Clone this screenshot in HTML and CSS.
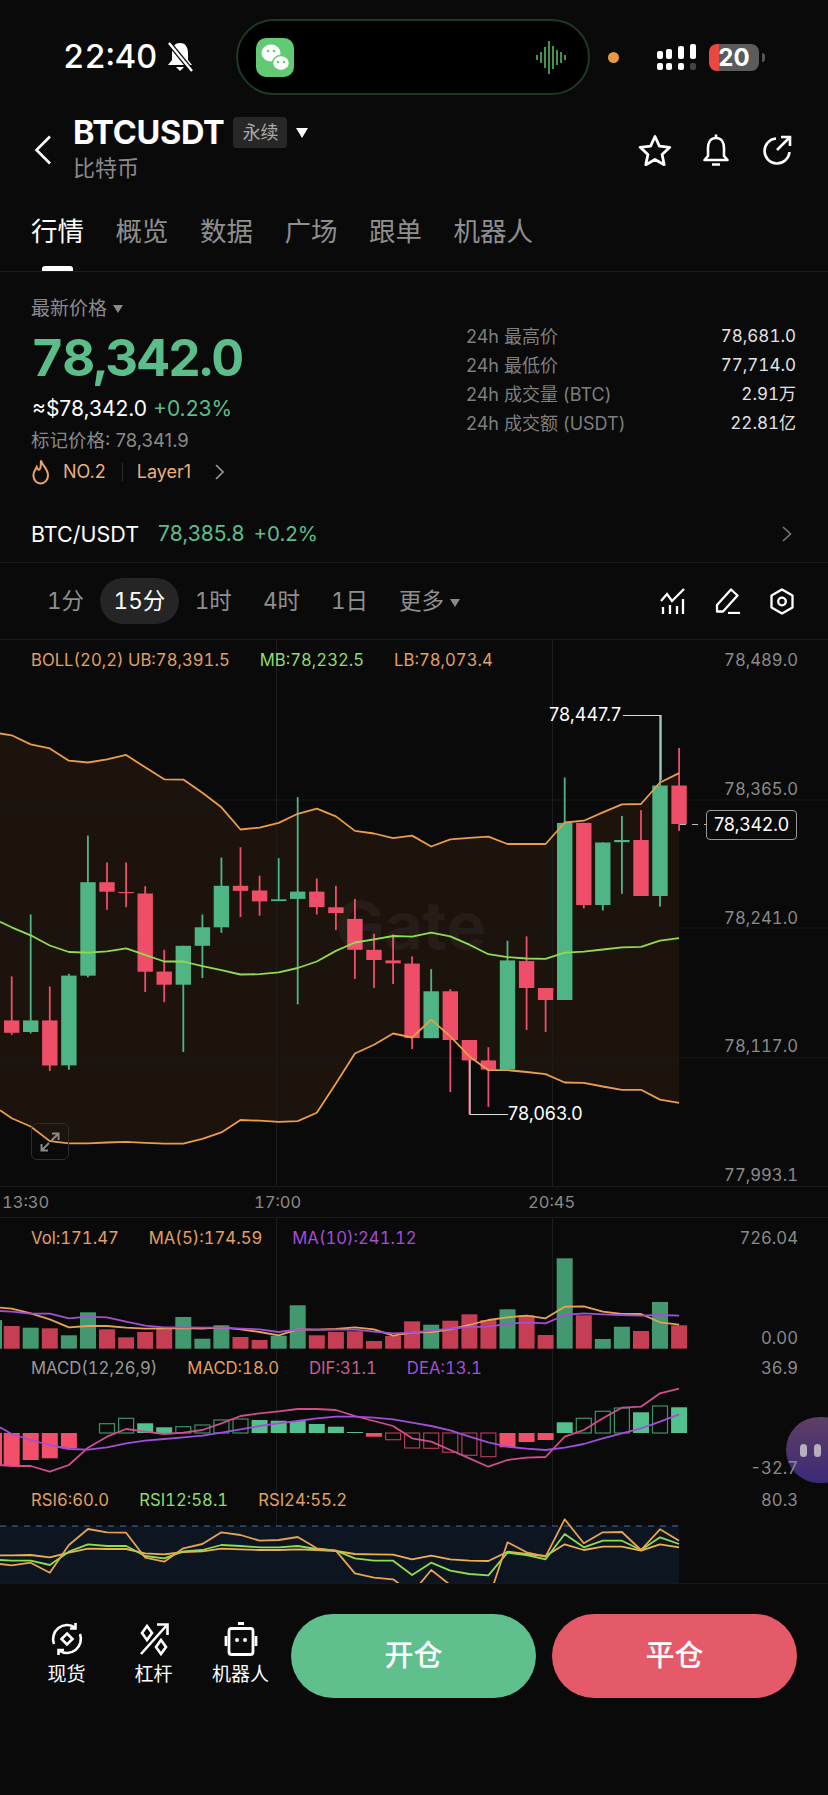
FILE: index.html
```html
<!DOCTYPE html>
<html lang="zh-CN">
<head>
    <meta charset="UTF-8">
    <meta name="viewport" content="width=device-width, initial-scale=1.0">
    <title>BTCUSDT 永续</title>
    <link rel="stylesheet" href="styles.css">
</head>
<body>
    <div class="status-bar">
        <span class="clock">22:40</span>
        <svg class="mute" width="30" height="30" viewBox="0 0 30 30">
            <path d="M15 1c-6 0-8 5-8 10v7l-4 5h24l-4-5v-7c0-5-2-10-8-10z" fill="#fff"/>
            <path d="M11 25h8l-4 4z" fill="#fff"/>
            <path d="M4 1l23 28" stroke="#0a0a0a" stroke-width="5"/>
            <path d="M4 1l23 28" stroke="#fff" stroke-width="2.400"/>
        </svg>
        <div class="island">
            <svg width="38" height="39" viewBox="0 0 38 39">
                <rect width="38" height="39" rx="10" fill="#62c975"/>
                <ellipse cx="15" cy="15" rx="9.500" ry="8.500" fill="#fff"/>
                <ellipse cx="25" cy="25" rx="8.500" ry="7.500" fill="#fff" stroke="#62c975" stroke-width="1.500"/>
                <circle cx="12" cy="13" r="1.300" fill="#62c975"/>
                <circle cx="18" cy="13" r="1.300" fill="#62c975"/>
                <circle cx="22" cy="24" r="1.200" fill="#62c975"/>
                <circle cx="28" cy="24" r="1.200" fill="#62c975"/>
            </svg>
            <svg width="30" height="33" viewBox="0 0 30 33" stroke="#58b95c" stroke-width="1.600">
                <path d="M1 14v5M5 11v11M9 6v21M13 0v33M17 5v23M21 9v15M25 11v11M29 14v5"/>
            </svg>
        </div>
        <span class="cam-dot"></span>
        <svg class="signal" width="40" height="26" viewBox="0 0 40 26" fill="#fff">
            <rect x="0" y="7" width="6" height="8" rx="2"/><rect x="0" y="19" width="6" height="7" rx="2"/>
            <rect x="9" y="5" width="6" height="10" rx="2"/><rect x="9" y="19" width="6" height="7" rx="2"/>
            <rect x="21" y="2" width="6" height="13" rx="2"/><rect x="21" y="19" width="6" height="7" rx="2"/>
            <rect x="33" y="0" width="6" height="15" rx="2"/><rect x="33" y="19" width="6" height="7" rx="2" fill="#444"/>
        </svg>
        <div class="battery">20</div>
        <span class="battery-nub"></span>
    </div>

    <div class="header">
        <svg class="back" width="18" height="30" viewBox="0 0 18 30" fill="none" stroke="#fff" stroke-width="2.600">
            <path d="M16 1.500L2.500 15 16 28.500"/>
        </svg>
        <div class="title-block">
            <div class="title-row">
                <span class="symbol">BTCUSDT</span>
                <span class="tag">永续</span>
                <span class="caret-white"></span>
            </div>
            <div class="subtitle">比特币</div>
        </div>
        <div class="header-icons">
            <svg width="34" height="32" viewBox="0 0 34 32" fill="none" stroke="#fff" stroke-width="2.800" stroke-linejoin="round">
                <path d="M17 2.500l4.400 9.600 10.400 1.200-7.700 7.200 2.100 10.200L17 25.500l-9.200 5.200 2.100-10.200-7.700-7.200 10.400-1.200z"/>
            </svg>
            <svg width="28" height="32" viewBox="0 0 28 32" fill="none" stroke="#fff" stroke-width="2.600" stroke-linejoin="round">
                <path d="M14 4c-6 0-8 5-8 10v8l-3.500 4h23L22 22v-8c0-5-2-10-8-10z"/>
                <path d="M14 0.500V4M10 30.500h8"/>
            </svg>
            <svg width="30" height="30" viewBox="0 0 30 30" fill="none" stroke="#fff" stroke-width="2.600">
                <path d="M14 3.500A12.500 12.500 0 1 0 27.500 17"/>
                <path d="M15 15L28 2M19 2h9v9"/>
            </svg>
        </div>
    </div>

    <div class="tabs">
        <span class="tab active">行情</span>
        <span class="tab">概览</span>
        <span class="tab">数据</span>
        <span class="tab">广场</span>
        <span class="tab">跟单</span>
        <span class="tab">机器人</span>
    </div>

    <div class="info">
        <div class="info-left">
            <div class="price-label">最新价格<span class="caret-gray"></span></div>
            <div class="last-price">78,342.0</div>
            <div class="fiat">≈$78,342.0 <span class="up">+0.23%</span></div>
            <div class="mark">标记价格: 78,341.9</div>
            <div class="hot">
                <svg width="18" height="26" viewBox="0 0 18 26" fill="none" stroke="#e9a36c" stroke-width="2">
                    <path d="M9 1.500c1 5 7 8 7 15a7.300 8 0 0 1-14.600 0c0-4 2-6 3.300-8.500 .7 2 1.500 3 2.600 2.500C9.500 9 8.500 5 9 1.500z"/>
                </svg>
                <span class="hot-rank">NO.2</span>
                <span class="hot-sep"></span>
                <span>Layer1</span>
                <svg class="hot-more" width="9" height="16" viewBox="0 0 9 16" fill="none" stroke="#999" stroke-width="1.600">
                    <path d="M1 1l7 7-7 7"/>
                </svg>
            </div>
        </div>
        <div class="stats">
            <div class="stat"><span>24h 最高价</span><b>78,681.0</b></div>
            <div class="stat"><span>24h 最低价</span><b>77,714.0</b></div>
            <div class="stat"><span>24h 成交量 (BTC)</span><b>2.91万</b></div>
            <div class="stat"><span>24h 成交额 (USDT)</span><b>22.81亿</b></div>
        </div>
    </div>

    <div class="pair-row">
        <span class="pair">BTC/USDT</span>
        <span class="up pair-price">78,385.8</span>
        <span class="up">+0.2%</span>
        <svg class="pair-more" width="10" height="16" viewBox="0 0 10 16" fill="none" stroke="#777" stroke-width="1.600">
            <path d="M1 1l7.500 7-7.500 7"/>
        </svg>
    </div>

    <div class="periods">
        <span class="period">1分</span>
        <span class="period active">15分</span>
        <span class="period">1时</span>
        <span class="period">4时</span>
        <span class="period">1日</span>
        <span class="period">更多<span class="caret-gray"></span></span>
        <div class="period-tools">
            <svg width="26" height="26" viewBox="0 0 26 26" fill="none" stroke="#fff" stroke-width="2.300">
                <path d="M1 13l6-7 5 7L24 1"/>
                <path d="M3 19v7M10 17v9M17 18v8M23 11v15"/>
            </svg>
            <svg width="26" height="26" viewBox="0 0 26 26" fill="none" stroke="#fff" stroke-width="2.300" stroke-linejoin="round">
                <path d="M16 1.500l6.500 6L8 23.500H2v-6.500z"/>
                <path d="M13 25h12"/>
            </svg>
            <svg width="24" height="27" viewBox="0 0 24 27" fill="none" stroke="#fff" stroke-width="2.300" stroke-linejoin="round">
                <path d="M12 1.500l10.500 6v12l-10.500 6-10.500-6v-12z"/>
                <circle cx="12" cy="13.500" r="3.800"/>
            </svg>
        </div>
    </div>

    <div class="charts">
        <svg id="chart" class="chart-canvas" width="828" height="943" viewBox="0 640 828 943"></svg>
        <div class="float-ball"><i></i><i></i></div>

        <div class="panel panel-main">
            <div class="legend">
                <span class="c-orange">BOLL(20,2) UB:78,391.5</span>
                <span class="c-green">MB:78,232.5</span>
                <span class="c-orange">LB:78,073.4</span>
            </div>
            <div class="axis">
                <span>78,489.0</span>
                <span>78,365.0</span>
                <span>78,241.0</span>
                <span>78,117.0</span>
                <span>77,993.1</span>
            </div>
            <div class="watermark">Gate</div>
            <div class="extreme extreme-high">78,447.7</div>
            <div class="extreme extreme-low">78,063.0</div>
            <div class="last-box">78,342.0</div>
            <div class="expand">
                <svg width="20" height="20" viewBox="0 0 20 20" fill="none" stroke="#8a8a8a" stroke-width="2">
                    <path d="M11 9l7-7M12 1.500h6.500V8" />
                    <path d="M9 11l-7 7M8 18.500H1.500V12"/>
                </svg>
            </div>
        </div>

        <div class="time-axis">
            <span>13:30</span>
            <span>17:00</span>
            <span>20:45</span>
        </div>

        <div class="panel panel-vol">
            <div class="legend">
                <span class="c-orange">Vol:171.47</span>
                <span class="c-orange">MA(5):174.59</span>
                <span class="c-purple">MA(10):241.12</span>
            </div>
            <div class="axis">
                <span>726.04</span>
                <span>0.00</span>
            </div>
        </div>

        <div class="panel panel-macd">
            <div class="legend">
                <span class="c-gray">MACD(12,26,9)</span>
                <span class="c-orange">MACD:18.0</span>
                <span class="c-pink">DIF:31.1</span>
                <span class="c-purple">DEA:13.1</span>
            </div>
            <div class="axis">
                <span>36.9</span>
                <span>-32.7</span>
            </div>
        </div>

        <div class="panel panel-rsi">
            <div class="legend">
                <span class="c-orange">RSI6:60.0</span>
                <span class="c-green">RSI12:58.1</span>
                <span class="c-orange">RSI24:55.2</span>
            </div>
            <div class="axis">
                <span>80.3</span>
            </div>
        </div>
    </div>

    <div class="bottom-bar">
        <div class="bottom-link">
            <svg width="34" height="34" viewBox="0 0 34 34" fill="none" stroke="#fff" stroke-width="2.600">
                <path d="M4 22A14 14 0 0 1 25 5.500"/>
                <path d="M30 12A14 14 0 0 1 9 28.500"/>
                <path d="M25.500 1v5.500H20M8.500 33v-5H14"/>
                <path d="M17 11.500l5.500 5.500-5.500 5.500-5.500-5.500z"/>
            </svg>
            <span>现货</span>
        </div>
        <div class="bottom-link">
            <svg width="34" height="34" viewBox="0 0 34 34" fill="none" stroke="#fff" stroke-width="2.600">
                <path d="M4 32L30 3M20 2.500h10.500V13"/>
                <path d="M10 4l5 7-5 7-5-7zM24 18l5 7-5 7-5-7z"/>
            </svg>
            <span>杠杆</span>
        </div>
        <div class="bottom-link link-wide">
            <svg width="34" height="34" viewBox="0 0 34 34" fill="none" stroke="#fff" stroke-width="2.800">
                <rect x="5" y="6.500" width="24" height="26" rx="2.500"/>
                <path d="M2 14v10M32 14v10"/>
                <rect x="14" y="0" width="6" height="3" fill="#fff" stroke="none"/>
                <circle cx="13" cy="18" r="2" fill="#fff" stroke="none"/>
                <circle cx="21" cy="18" r="2" fill="#fff" stroke="none"/>
            </svg>
            <span>机器人</span>
        </div>
        <div class="btn btn-open">开仓</div>
        <div class="btn btn-close">平仓</div>
    </div>

    <script src="chart.js"></script>
</body>
</html>
```

FILE: styles.css
```css
* {
    box-sizing: border-box;
}
html, body {
    margin: 0;
    height: 1795px;
    overflow: hidden;
}
body {
    width: 828px;
    background: #0a0a0a;
    color: #fff;
    font-family: Inter, "Noto Sans CJK SC", sans-serif;
}
.up { color: #5bbd8a; }
.c-orange { color: #e0a162; }
.c-green { color: #8fdc6c; }
.c-purple { color: #a24fd8; }
.c-pink { color: #c75c97; }
.c-gray { color: #9a9a9a; }

/* status bar */
.status-bar {
    display: flex;
    align-items: center;
    height: 114px;
    padding-left: 63px;
}
.clock {
    width: 102px;
    margin-top: -2px;
    font-size: 33px;
    font-weight: 500;
    font-variant-numeric: tabular-nums;
}
.mute { margin-right: 41px; }
.island {
    display: flex;
    align-items: center;
    justify-content: space-between;
    width: 354px;
    height: 76px;
    padding: 0 22px 0 18px;
    background: #000;
    border: 2px solid #1e3a22;
    border-radius: 38px;
}
.cam-dot {
    width: 11px;
    height: 11px;
    margin-left: 18px;
    background: #e89a3e;
    border-radius: 50%;
}
.signal { margin-left: 38px; }
.battery {
    width: 50px;
    height: 27px;
    margin-left: 12px;
    background: linear-gradient(90deg, #e8483f 20%, #5b5b5b 20%);
    border-radius: 8px;
    font-size: 24px;
    font-weight: 700;
    line-height: 27px;
    text-align: center;
}
.battery-nub {
    width: 3px;
    height: 9px;
    margin-left: 3px;
    background: #555;
    border-radius: 0 3px 3px 0;
}

/* header */
.header {
    display: flex;
    align-items: center;
    height: 76px;
    padding: 0 36px 5px 34px;
}
.back { margin-right: 21px; }
.title-block { margin-top: -2px; }
.title-row {
    display: flex;
    align-items: center;
    height: 36px;
}
.symbol {
    font-size: 32.500px;
    font-weight: 700;
    letter-spacing: -0.300px;
}
.tag {
    width: 54px;
    height: 31px;
    margin-left: 9px;
    background: #272727;
    border-radius: 4px;
    color: #aaa;
    font-size: 18px;
    line-height: 31px;
    text-align: center;
}
.caret-white {
    width: 0;
    height: 0;
    margin-left: 9px;
    border-left: 6px solid transparent;
    border-right: 6px solid transparent;
    border-top: 10px solid #fff;
}
.subtitle {
    margin-top: 2px;
    color: #8a8a8a;
    font-size: 22px;
    line-height: 30px;
}
.header-icons {
    display: flex;
    align-items: center;
    gap: 30px;
    margin-left: auto;
}
.header-icons svg:last-child { margin-left: 2px; }

/* tabs */
.tabs {
    display: flex;
    gap: 31.500px;
    height: 82px;
    padding: 27px 0 0 31px;
    border-bottom: 1px solid #1d1d1d;
}
.tab {
    position: relative;
    color: #8f8f8f;
    font-size: 26.500px;
    line-height: 28px;
}
.tab.active { color: #fff; }
.tab.active::after {
    content: "";
    position: absolute;
    left: 11px;
    top: 49px;
    width: 31px;
    height: 5px;
    background: #fff;
    border-radius: 3px 3px 0 0;
}

/* price block */
.info {
    display: flex;
    justify-content: space-between;
    height: 233px;
    padding: 22px 32px 0;
}
.price-label {
    margin-top: 1px;
    margin-left: -1px;
    color: #8a8a8a;
    font-size: 19px;
    line-height: 28px;
}
.caret-gray {
    display: inline-block;
    margin-left: 6px;
    border-left: 5.500px solid transparent;
    border-right: 5.500px solid transparent;
    border-top: 8px solid #8a8a8a;
    vertical-align: 2px;
}
.last-price {
    margin-top: 2px;
    margin-left: -1px;
    color: #5bbd8a;
    font-size: 51px;
    font-weight: 700;
    font-variant-numeric: tabular-nums;
    letter-spacing: -1.700px;
    line-height: 66px;
}
.fiat {
    margin-top: 3px;
    font-size: 21px;
    line-height: 30px;
}
.mark {
    margin-top: 2px;
    margin-left: -1px;
    color: #8a8a8a;
    font-size: 18.500px;
    line-height: 28px;
}
.hot {
    display: flex;
    align-items: center;
    margin-top: 4px;
    color: #e9b07c;
    font-size: 18px;
    line-height: 28px;
}
.hot-rank { margin-left: 13px; }
.hot-sep {
    width: 1px;
    height: 18px;
    margin: 0 14px 0 16px;
    background: #2c2c2c;
}
.hot-more { margin-left: 24px; }
.stats {
    width: 330px;
    padding-top: 28px;
}
.stat {
    display: flex;
    justify-content: space-between;
    color: #7f7f7f;
    font-size: 18px;
    line-height: 29px;
}
.stat b {
    color: #e2e2e2;
    font-size: 17px;
    font-variant-numeric: tabular-nums;
    font-weight: 400;
}

/* spot pair row */
.pair-row {
    display: flex;
    align-items: center;
    gap: 9px;
    height: 58px;
    padding: 0 36px 0 31px;
    border-bottom: 1px solid #1a1a1a;
    font-size: 20.500px;
}
.pair {
    margin-right: 10px;
    font-size: 21.500px;
}
.pair-price { font-size: 21px; }
.pair-more { margin-left: auto; }

/* period selector */
.periods {
    display: flex;
    align-items: center;
    height: 77px;
    padding: 0 34px 0 31.500px;
    border-bottom: 1px solid #1a1a1a;
    font-variant-numeric: tabular-nums;
}
.period {
    padding: 0 15.500px;
    color: #8f8f8f;
    font-size: 22.500px;
    line-height: 46px;
}
.period.active {
    padding: 0 14px;
    background: #252525;
    border-radius: 23px;
    color: #fff;
}
.period-tools {
    display: flex;
    align-items: center;
    gap: 29px;
    margin-left: auto;
}

/* chart stack */
.charts {
    position: relative;
    height: 943px;
}
.chart-canvas {
    position: absolute;
    left: 0;
    top: 0;
}
.panel {
    position: relative;
    display: flex;
    justify-content: space-between;
    padding-right: 30px;
    font-size: 16.700px;
    font-variant-numeric: tabular-nums;
    line-height: 24px;
}
.legend {
    display: flex;
    gap: 30px;
    height: 24px;
    padding-left: 31px;
}
.axis {
    display: flex;
    flex-direction: column;
    justify-content: space-between;
    align-items: flex-end;
    color: #8a8a8a;
}
.panel-main {
    height: 547px;
    padding-top: 8px;
}
.panel-vol {
    height: 138px;
    padding-top: 8px;
}
.panel-vol .axis { height: 124px; }
.panel-macd { height: 132px; }
.panel-macd .axis { height: 124px; }
.panel-rsi { height: 95px; }
.time-axis {
    position: relative;
    display: grid;
    grid-template-columns: 252px 274px auto;
    height: 31px;
    padding-left: 2px;
    color: #8a8a8a;
    font-size: 16.500px;
    font-variant-numeric: tabular-nums;
    line-height: 31px;
}
.watermark {
    position: absolute;
    left: 335px;
    top: 250px;
    color: rgba(255, 255, 255, 0.045);
    font-size: 66px;
    font-weight: 700;
    line-height: 70px;
}
.extreme {
    position: absolute;
    font-size: 18px;
    font-variant-numeric: normal;
    line-height: 24px;
}
.extreme-high { left: 549px; top: 63px; }
.extreme-low { left: 508px; top: 462px; }
.last-box {
    position: absolute;
    left: 706px;
    top: 170px;
    width: 91px;
    height: 30px;
    border: 1px solid #9a9a9a;
    border-radius: 4px;
    background: #0a0a0a;
    font-size: 18px;
    font-variant-numeric: normal;
    line-height: 28px;
    text-align: center;
}
.expand {
    position: absolute;
    left: 31px;
    top: 483px;
    display: flex;
    align-items: center;
    justify-content: center;
    width: 38px;
    height: 37px;
    border: 1.500px solid #2e2e2e;
    border-radius: 6px;
}
.float-ball {
    position: absolute;
    left: 786px;
    top: 777px;
    display: flex;
    align-items: center;
    gap: 7px;
    width: 70px;
    height: 66px;
    padding-left: 14px;
    background: linear-gradient(#5f3f66, #3b2a78);
    border-radius: 33px;
}
.float-ball i {
    width: 7px;
    height: 13px;
    background: #b5b0bb;
    border-radius: 4px;
}

/* bottom bar */
.bottom-bar {
    display: flex;
    align-items: flex-start;
    height: 212px;
    padding-top: 30px;
    border-top: 1px solid #171717;
}
.bottom-link {
    display: flex;
    flex-direction: column;
    align-items: center;
    gap: 6px;
    width: 87px;
    margin-top: 8px;
    font-size: 19px;
    line-height: 26px;
}
.bottom-link:first-child { margin-left: 23px; }
.bottom-link.link-wide { margin-right: 7px; }
.btn {
    width: 245px;
    height: 84px;
    border-radius: 42px;
    font-size: 29px;
    font-weight: 500;
    line-height: 84px;
    text-align: center;
}
.btn-open {
    margin-right: 16px;
    background: #5fbf8d;
}
.btn-close { background: #e55a69; }
```

FILE: chart.js
```js
// candle coordinates were read off a 3x crop, so keep them in crop units and convert here
const mainY = z => 640 + z / 2.75;
const lowY = z => 1210 + z / 3;
const xAt = i => 11.67 + 19.07 * i;
const endX = xAt(35);

const GREEN = '#50b585';
const RED = '#ee4e67';

// [color, wickTop, bodyTop, bodyBottom, wickBottom]
const candles = [
    ['r', 925, 1046, 1080, 1086], ['g', 755, 1046, 1078, 1082], ['r', 953, 1046, 1170, 1185],
    ['g', 918, 923, 1170, 1182], ['g', 538, 666, 923, 928], ['r', 612, 666, 692, 742],
    ['r', 612, 693, 696, 735], ['r', 677, 697, 912, 968], ['r', 852, 912, 948, 996],
    ['g', 841, 841, 948, 1133], ['g', 755, 790, 841, 930], ['g', 598, 676, 790, 805],
    ['r', 570, 676, 690, 762], ['r', 648, 689, 719, 758], ['g', 600, 713, 718, 718],
    ['g', 432, 692, 712, 1002], ['r', 656, 692, 735, 755], ['r', 676, 735, 751, 798],
    ['r', 712, 767, 852, 932], ['r', 808, 852, 880, 957], ['r', 810, 881, 889, 946],
    ['r', 870, 890, 1095, 1125], ['g', 905, 966, 1095, 1095], ['r', 960, 966, 1100, 1243],
    ['r', 1100, 1100, 1156, 1305], ['r', 1120, 1156, 1181, 1284], ['g', 827, 881, 1181, 1181],
    ['r', 815, 883, 957, 1072], ['r', 957, 957, 990, 1078], ['g', 378, 503, 990, 990],
    ['r', 503, 503, 729, 738], ['g', 557, 557, 729, 744], ['g', 484, 550, 556, 698],
    ['r', 468, 550, 704, 704], ['g', 207, 400, 704, 733], ['r', 297, 400, 506, 525]
];

// each line: value at x=0, then one value per candle
const bollUp = [257, 262, 287, 298, 332, 337, 328, 316, 350, 383, 384, 420, 460, 521, 516, 503, 478, 464, 485, 525, 532, 545, 538, 568, 548, 544, 541, 561, 561, 561, 502, 497, 474, 452, 451, 392, 366];
const bollMid = [775, 790, 812, 840, 858, 860, 856, 848, 866, 884, 884, 897, 908, 920, 919, 914, 902, 884, 855, 832, 823, 814, 816, 805, 815, 838, 864, 872, 876, 877, 860, 857, 851, 845, 844, 827, 820];
const bollLow = [1293, 1315, 1338, 1378, 1384, 1384, 1382, 1380, 1383, 1385, 1385, 1372, 1354, 1320, 1322, 1325, 1323, 1300, 1220, 1137, 1113, 1082, 1093, 1044, 1090, 1145, 1183, 1183, 1188, 1194, 1217, 1218, 1228, 1237, 1237, 1264, 1273];

const volTops = [348, 353, 355, 376, 307, 358, 382, 366, 354, 321, 386, 346, 381, 390, 377, 286, 376, 366, 364, 393, 378, 334, 344, 332, 313, 330, 298, 316, 375, 145, 316, 387, 350, 363, 276, 346];
const ma5 = [293, 296, 310, 328, 352, 348, 348, 353, 356, 355, 354, 356, 352, 358, 366, 376, 358, 359, 357, 352, 358, 377, 368, 366, 358, 345, 330, 322, 317, 325, 290, 289, 305, 312, 312, 337, 344];
const ma10 = [303, 305, 311, 311, 325, 320, 322, 335, 347, 352, 352, 353, 353, 356, 358, 366, 358, 359, 359, 359, 365, 370, 368, 362, 356, 351, 350, 342, 337, 340, 315, 310, 313, 315, 317, 315, 317];

// [far edge of the bar from the zero line, filled?]
const macdBars = [
    [768, 1], [750, 1], [745, 1], [715, 1], null, [641, 0], [625, 0], [640, 1], [652, 1], [650, 0], [645, 0], [630, 0],
    [627, 0], [630, 1], [632, 1], [633, 1], [642, 1], [650, 1], [666, 1], [680, 1], [689, 0], [714, 0], [715, 0],
    [727, 0], [736, 0], [740, 0], [712, 1], [696, 1], [690, 1], [637, 1], [625, 0], [604, 0], [594, 0], [607, 1], [588, 0], [592, 1]
];
const dif = [765, 768, 768, 785, 765, 713, 680, 657, 665, 672, 668, 660, 640, 618, 610, 604, 597, 597, 600, 618, 633, 648, 685, 695, 720, 745, 770, 750, 743, 741, 680, 660, 625, 593, 590, 550, 536];
const dea = [652, 672, 690, 705, 717, 719, 712, 700, 692, 687, 682, 677, 668, 658, 648, 640, 633, 625, 620, 620, 623, 628, 638, 648, 661, 680, 697, 710, 716, 720, 713, 702, 685, 670, 655, 635, 613];

const rsi6 = [1062, 1066, 1058, 1088, 1005, 957, 967, 968, 1043, 1055, 1015, 1002, 967, 975, 992, 990, 981, 1015, 1022, 1090, 1103, 1108, 1150, 1080, 1125, 1150, 1170, 997, 1027, 1040, 928, 1000, 967, 966, 1020, 958, 992];
const rsi12 = [1050, 1052, 1052, 1065, 1025, 1003, 1008, 1008, 1038, 1045, 1024, 1020, 1005, 1008, 1012, 1012, 1008, 1017, 1022, 1045, 1052, 1052, 1095, 1058, 1082, 1092, 1096, 1028, 1035, 1048, 972, 1012, 992, 992, 1020, 982, 1002];
const rsi24 = [1036, 1036, 1035, 1042, 1028, 1016, 1017, 1017, 1030, 1033, 1026, 1024, 1016, 1018, 1020, 1020, 1018, 1020, 1023, 1032, 1033, 1034, 1048, 1037, 1048, 1052, 1053, 1025, 1032, 1038, 1003, 1020, 1010, 1010, 1022, 1003, 1012];

function points(values, toY) {
    return values.map((v, i) => `${i === 0 ? 0 : xAt(i - 1).toFixed(1)},${toY(v).toFixed(1)}`);
}

function line(values, toY, color, extra = '') {
    return `<polyline points="${points(values, toY).join(' ')}" fill="none" stroke="${color}" stroke-width="1.800" stroke-linejoin="round" ${extra}/>`;
}

function rect(x, y, w, h, attrs) {
    return `<rect x="${x.toFixed(1)}" y="${y.toFixed(1)}" width="${w.toFixed(1)}" height="${h.toFixed(1)}" ${attrs}/>`;
}

function gridLines() {
    let out = '';
    [800, 928, 1058].forEach(y => {
        out += `<path d="M0 ${y}H828" stroke="#181818" stroke-width="1"/>`;
    });
    [1186.5, 1217.5].forEach(y => {
        out += `<path d="M0 ${y}H828" stroke="#1b1b1b" stroke-width="1"/>`;
    });
    [276.5, 552.5].forEach(x => {
        out += `<path d="M${x} 640V1186M${x} 1218V1583" stroke="#1c1c1c" stroke-width="1"/>`;
    });
    return out;
}

function mainPanel() {
    const band = points(bollUp, mainY).concat(points(bollLow, mainY).reverse()).join(' ');
    let out = `<polygon points="${band}" fill="#1c130c"/>`;
    out += gridLines();
    candles.forEach((c, i) => {
        const x = xAt(i);
        const color = c[0] === 'g' ? GREEN : RED;
        out += rect(x - 0.9, mainY(c[1]), 1.8, mainY(c[4]) - mainY(c[1]), `fill="${color}"`);
        out += rect(x - 7.700, mainY(c[2]), 15.400, mainY(c[3]) - mainY(c[2]), `fill="${color}"`);
    });
    out += line(bollMid, mainY, '#8fdc4f');
    out += line(bollUp, mainY, '#eb9d4a');
    out += line(bollLow, mainY, '#eb9d4a');

    // leaders for the high, low and last price labels
    out += '<path d="M623 715.500H661V780" fill="none" stroke="#dcdcdc" stroke-width="1.200"/>';
    out += '<path d="M470 1060V1114.500H508" fill="none" stroke="#dcdcdc" stroke-width="1.200"/>';
    out += '<path d="M680 824.500H706" stroke="#bdbdbd" stroke-width="1.200" stroke-dasharray="6 6"/>';
    return out;
}

function volPanel() {
    let out = rect(-14, lowY(330), 16, lowY(416) - lowY(330), 'fill="#44986f"');
    volTops.forEach((top, i) => {
        const color = candles[i][0] === 'g' ? '#44986f' : '#c63e53';
        out += rect(xAt(i) - 8, lowY(top), 16, lowY(416) - lowY(top), `fill="${color}"`);
    });
    out += line(ma5, lowY, '#e8a352');
    out += line(ma10, lowY, '#a24fd8');
    return out;
}

function macdPanel() {
    const zero = 669;
    let out = rect(-14, lowY(zero), 16, lowY(768) - lowY(zero), 'fill="#f24f6a"');
    macdBars.forEach((bar, i) => {
        if (!bar) return;
        const isRed = bar[0] > zero;
        const top = lowY(Math.min(bar[0], zero));
        const h = Math.abs(lowY(bar[0]) - lowY(zero));
        if (bar[1]) {
            out += rect(xAt(i) - 8, top, 16, h, `fill="${isRed ? '#f24f6a' : '#55c08f'}"`);
        } else {
            out += rect(xAt(i) - 7.500, top, 15, h, `fill="none" stroke="${isRed ? '#a83f56' : '#3f8f6c'}" stroke-width="1.200"`);
        }
    });
    out += line(dif, lowY, '#cf4f8c');
    out += line(dea, lowY, '#a24fd8');
    return out;
}

function rsiPanel() {
    let out = rect(0, lowY(948), endX, lowY(1120) - lowY(948), 'fill="#0d1520"');
    out += `<path d="M0 ${lowY(948)}H${endX}" stroke="#35506f" stroke-width="1.300" stroke-dasharray="6 6"/>`;
    out += '<clipPath id="rsi-clip"><rect x="0" y="1500" width="828" height="83"/></clipPath>';
    const clip = 'clip-path="url(#rsi-clip)"';
    out += line(rsi24, lowY, '#eeb04f', clip);
    out += line(rsi12, lowY, '#8fdc4f', clip);
    out += line(rsi6, lowY, '#e8a352', clip);
    return out;
}

document.getElementById('chart').innerHTML = mainPanel() + volPanel() + macdPanel() + rsiPanel();
```
